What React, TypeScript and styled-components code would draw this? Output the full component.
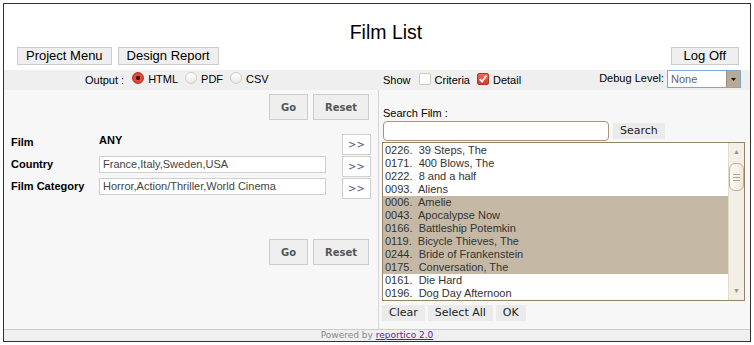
import React from 'react'
import styled, { createGlobalStyle } from 'styled-components'

const films = [
  { code: '0226', title: '39 Steps, The', selected: false },
  { code: '0171', title: '400 Blows, The', selected: false },
  { code: '0222', title: '8 and a half', selected: false },
  { code: '0093', title: 'Aliens', selected: false },
  { code: '0006', title: 'Amelie', selected: true },
  { code: '0043', title: 'Apocalypse Now', selected: true },
  { code: '0166', title: 'Battleship Potemkin', selected: true },
  { code: '0119', title: 'Bicycle Thieves, The', selected: true },
  { code: '0244', title: 'Bride of Frankenstein', selected: true },
  { code: '0175', title: 'Conversation, The', selected: true },
  { code: '0161', title: 'Die Hard', selected: false },
  { code: '0196', title: 'Dog Day Afternoon', selected: false },
]

const criteria = [
  { label: 'Film', value: null },
  { label: 'Country', value: 'France,Italy,Sweden,USA' },
  { label: 'Film Category', value: 'Horror,Action/Thriller,World Cinema' },
]

const GlobalStyle = createGlobalStyle`
  html, body {
    margin: 0;
    padding: 0;
    background: #fff;
    font-family: "Liberation Sans", Arial, sans-serif;
  }
  * { box-sizing: border-box; }
`

const GoButtons = () => (
  <ActionRow>
    <ActionButton>Go</ActionButton>
    <ActionButton>Reset</ActionButton>
  </ActionRow>
)

export default function App() {
  return (
    <>
      <GlobalStyle />
      <Frame>
        <Header>
          <Title>Film List</Title>
          <MenuRow>
            <MenuButton>Project Menu</MenuButton>
            <MenuButton>Design Report</MenuButton>
            <Spacer />
            <MenuButton $wide>Log Off</MenuButton>
          </MenuRow>
        </Header>

        <Toolbar>
          <ToolbarHalf $left>
            <ToolLabel>Output :</ToolLabel>
            <Option><Radio $checked />HTML</Option>
            <Option><Radio />PDF</Option>
            <Option><Radio />CSV</Option>
          </ToolbarHalf>
          <ToolbarHalf>
            <ToolLabel>Show</ToolLabel>
            <Option><Check /><span>Criteria</span></Option>
            <Option>
              <Check $checked>
                <svg width="10" height="10" viewBox="0 0 10 10">
                  <path d="M1.8 5.2 L4 7.6 L8.4 1.6" fill="none" stroke="#fff" strokeWidth="1.8" />
                </svg>
              </Check>
              <span>Detail</span>
            </Option>
            <DebugGroup>
              Debug Level:
              <FakeSelect>
                <span>None</span>
                <SelectArrow>
                  <svg width="5" height="3" viewBox="0 0 5 3"><path d="M0 0 H5 L2.5 3 Z" fill="#111" /></svg>
                </SelectArrow>
              </FakeSelect>
            </DebugGroup>
          </ToolbarHalf>
        </Toolbar>

        <Body>
          <CriteriaPanel>
            <GoButtons />
            <CriteriaGrid>
              {criteria.map(c => (
                <React.Fragment key={c.label}>
                  <CriteriaLabel>{c.label}</CriteriaLabel>
                  {c.value === null
                    ? <AnyValue>ANY</AnyValue>
                    : <CriteriaInput>{c.value}</CriteriaInput>}
                  <ExpandButton>&gt;&gt;</ExpandButton>
                </React.Fragment>
              ))}
            </CriteriaGrid>
            <LowerActions>
              <GoButtons />
            </LowerActions>
          </CriteriaPanel>

          <LookupPanel>
            <SearchLabel>Search Film :</SearchLabel>
            <SearchRow>
              <SearchInput />
              <SmallButton>Search</SmallButton>
            </SearchRow>
            <ListBox>
              <ListRows>
                {films.map(f => (
                  <ListRow key={f.code} $selected={f.selected}>{`${f.code}.  ${f.title}`}</ListRow>
                ))}
              </ListRows>
              <ScrollBar>
                <ScrollArrow>&#9650;</ScrollArrow>
                <ScrollThumb>
                  <Grip /><Grip /><Grip />
                </ScrollThumb>
                <Spacer />
                <ScrollArrow>&#9660;</ScrollArrow>
              </ScrollBar>
            </ListBox>
            <ListActions>
              <SmallButton>Clear</SmallButton>
              <SmallButton>Select All</SmallButton>
              <SmallButton>OK</SmallButton>
            </ListActions>
          </LookupPanel>
        </Body>

        <Footer>
          Powered by <FooterLink href="#">reportico 2.0</FooterLink>
        </Footer>
      </Frame>
    </>
  )
}

const Frame = styled.div`
  margin: 3px;
  width: 748px;
  height: 339px;
  border: 1px solid #333;
  display: flex;
  flex-direction: column;
  background: #fff;
`

const Header = styled.header`
  padding: 16px 11px 5px 13px;
  display: flex;
  flex-direction: column;
`

const Title = styled.h1`
  margin: 0 0 3px 16px;
  font-size: 19.5px;
  font-weight: normal;
  line-height: 24px;
  text-align: center;
  color: #000;
`

const MenuRow = styled.div`
  display: flex;
  gap: 6px;
`

const Spacer = styled.div`
  flex: 1;
`

const MenuButton = styled.button<{ $wide?: boolean }>`
  height: 18px;
  padding: 0 ${p => (p.$wide ? '12px' : '8px')};
  border: 1px solid #ccc;
  background: #efefef;
  font-family: "Liberation Sans", Arial, sans-serif;
  font-size: 13px;
  line-height: 16px;
  color: #000;
`

const Toolbar = styled.div`
  height: 20px;
  display: flex;
  background: #efefef;
  font-size: 11px;
  color: #000;
`

const ToolbarHalf = styled.div<{ $left?: boolean }>`
  width: ${p => (p.$left ? '374px' : 'auto')};
  flex: ${p => (p.$left ? '0 0 auto' : '1')};
  display: flex;
  align-items: flex-end;
  padding: 0 9px 3px ${p => (p.$left ? '81px' : '5px')};
`

const ToolLabel = styled.span`
  margin-right: 8px;
  line-height: 13px;
`

const Option = styled.label`
  display: flex;
  align-items: center;
  gap: 4px;
  margin-right: 7px;
  line-height: 13px;
`

const Radio = styled.span<{ $checked?: boolean }>`
  width: 12px;
  height: 12px;
  border-radius: 50%;
  margin-bottom: 3px;
  border: 1px solid ${p => (p.$checked ? '#b8321f' : '#d4cbbb')};
  background: ${p => (p.$checked
    ? 'radial-gradient(circle at 50% 50%, #3b0d08 0 1.8px, #e2503e 2.6px, #d23b28 100%)'
    : 'linear-gradient(#ffffff, #ece9e4)')};
`

const Check = styled.span<{ $checked?: boolean }>`
  width: 12px;
  height: 12px;
  border-radius: 2px;
  margin-bottom: 2px;
  display: flex;
  align-items: center;
  justify-content: center;
  border: 1px solid ${p => (p.$checked ? '#b8321f' : '#cfc6b5')};
  background: ${p => (p.$checked ? 'linear-gradient(#ec6a58, #d83d2a)' : '#fff')};
`

const DebugGroup = styled.div`
  margin-left: auto;
  align-self: flex-start;
  display: flex;
  align-items: flex-start;
  gap: 3px;
  line-height: 16px;
`

const FakeSelect = styled.div`
  width: 74px;
  height: 18px;
  border: 1px solid #7fa7d2;
  background: #fff;
  display: flex;
  align-items: center;
  justify-content: space-between;
  padding-left: 3px;
  color: #5d6470;
  font-size: 11px;
`

const SelectArrow = styled.span`
  width: 14px;
  height: 16px;
  background: #b7aa94;
  border-left: 1px solid #9d907a;
  display: flex;
  align-items: center;
  justify-content: center;
`

const Body = styled.main`
  flex: 1;
  display: flex;
  min-height: 0;
`

const CriteriaPanel = styled.section`
  width: 375px;
  flex: 0 0 auto;
  background: #f7f7f7;
  border-right: 1px solid #d6d6d6;
  padding: 4px 9px 0 7px;
  display: flex;
  flex-direction: column;
`

const ActionRow = styled.div`
  display: flex;
  justify-content: flex-end;
  gap: 5px;
`

const ActionButton = styled.button`
  height: 26px;
  padding: 0 11px;
  border: 1px solid #cdcdcd;
  background: #efefef;
  color: #555;
  font-family: "DejaVu Sans", Verdana, sans-serif;
  font-size: 10px;
  font-weight: bold;
`

const CriteriaGrid = styled.div`
  margin-top: 14px;
  display: grid;
  grid-template-columns: 88px 227px 45px;
  grid-auto-rows: 21px;
  row-gap: 1px;
  & > button {
    justify-self: end;
  }
`

const CriteriaLabel = styled.div`
  font-size: 11px;
  font-weight: bold;
  line-height: 17px;
  color: #000;
`

const AnyValue = styled.div`
  font-size: 11px;
  font-weight: bold;
  line-height: 13px;
  color: #000;
`

const CriteriaInput = styled.div`
  height: 17px;
  border: 1px solid #cfcfcf;
  background: #fff;
  padding-left: 3px;
  font-size: 11px;
  line-height: 15px;
  color: #444;
  white-space: nowrap;
  overflow: hidden;
`

const ExpandButton = styled.button`
  width: 29px;
  height: 21px;
  padding: 0;
  border: 1px solid #cfcfcf;
  background: #fff;
  color: #4d5a78;
  font-family: "DejaVu Sans", Verdana, sans-serif;
  font-size: 10px;
`

const LowerActions = styled.div`
  margin-top: 40px;
`

const LookupPanel = styled.section`
  flex: 1;
  background: #f7f7f7;
  padding: 16px 4px 0 3px;
  display: flex;
  flex-direction: column;
`

const SearchLabel = styled.div`
  font-size: 11px;
  line-height: 14px;
  color: #000;
  padding-left: 1px;
`

const SearchRow = styled.div`
  margin-top: 1px;
  display: flex;
  align-items: center;
  gap: 4px;
  padding-left: 1px;
`

const SearchInput = styled.input`
  width: 226px;
  height: 20px;
  border: 1px solid #a6957a;
  border-radius: 4px;
  background: #fff;
  outline: none;
`

const SmallButton = styled.button`
  height: 16px;
  padding: 0 7px;
  border: none;
  background: #ebebeb;
  color: #222;
  font-family: "DejaVu Sans", Verdana, sans-serif;
  font-size: 11px;
  line-height: 16px;
`

const ListBox = styled.div`
  margin-top: 1px;
  width: 363px;
  height: 159px;
  border: 1px solid #948468;
  background: #fff;
  display: flex;
  overflow: hidden;
`

const ListRows = styled.div`
  flex: 1;
  padding-top: 1px;
`

const ListRow = styled.div<{ $selected?: boolean }>`
  height: 13px;
  padding-left: 2px;
  font-size: 11px;
  line-height: 13px;
  color: #333;
  white-space: pre;
  background: ${p => (p.$selected ? '#c5b9a6' : 'transparent')};
`

const ScrollBar = styled.div`
  width: 16px;
  flex: 0 0 auto;
  background: #f3efe7;
  border-left: 1px solid #e2dacb;
  display: flex;
  flex-direction: column;
  align-items: center;
  padding: 4px 0 4px;
`

const ScrollArrow = styled.div`
  font-size: 7px;
  line-height: 10px;
  color: #9a9488;
`

const ScrollThumb = styled.div`
  margin-top: 6px;
  width: 15px;
  height: 28px;
  border: 1px solid #c3b392;
  border-radius: 6px;
  background: linear-gradient(to right, #fcfaf5, #efe9dc);
  display: flex;
  flex-direction: column;
  align-items: center;
  justify-content: center;
  gap: 2px;
`

const Grip = styled.span`
  width: 7px;
  height: 1px;
  background: #b0a690;
`

const ListActions = styled.div`
  margin-top: 4px;
  display: flex;
  gap: 3px;
`

const Footer = styled.footer`
  height: 12px;
  border-top: 1px solid #cccccc;
  background: #efefef;
  text-align: center;
  font-family: "DejaVu Sans", Verdana, sans-serif;
  font-size: 9px;
  line-height: 11px;
  color: #8a8a8a;
`

const FooterLink = styled.a`
  color: #5b1fa0;
  text-decoration: underline;
`
